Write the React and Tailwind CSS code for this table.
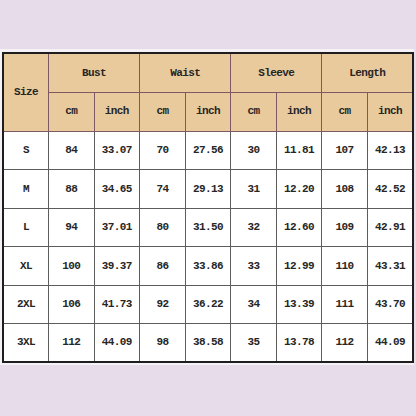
import React from "react";

const rows = [
  ["S", "84", "33.07", "70", "27.56", "30", "11.81", "107", "42.13"],
  ["M", "88", "34.65", "74", "29.13", "31", "12.20", "108", "42.52"],
  ["L", "94", "37.01", "80", "31.50", "32", "12.60", "109", "42.91"],
  ["XL", "100", "39.37", "86", "33.86", "33", "12.99", "110", "43.31"],
  ["2XL", "106", "41.73", "92", "36.22", "34", "13.39", "111", "43.70"],
  ["3XL", "112", "44.09", "98", "38.58", "35", "13.78", "112", "44.09"],
];

const groups = ["Bust", "Waist", "Sleeve", "Length"];

export default function App() {
  return (
    <div
      className="w-[416px] h-[416px] bg-[#e7dcea] pt-[49px] overflow-hidden"
      style={{ fontFamily: '"Liberation Mono", "DejaVu Sans Mono", monospace' }}
    >
      <div className="bg-[#f6f1f6] pt-[3px] pb-[2px] px-[2px] w-[414px]">
        <table className="w-[412px] h-[311px] table-fixed border-collapse border-2 border-[#1e1e1e] text-[11px] font-bold tracking-[-0.6px] text-[#262626]">
          <thead>
            <tr className="h-[39px] bg-[#e9ca9c]">
              <th rowSpan={2} className="border border-[#7d5a63] font-bold">
                Size
              </th>
              {groups.map((g) => (
                <th key={g} colSpan={2} className="border border-[#7d5a63] font-bold">
                  {g}
                </th>
              ))}
            </tr>
            <tr className="h-[39px] bg-[#e9ca9c]">
              {groups.map((g) => (
                <React.Fragment key={g}>
                  <th className="border border-[#7d5a63] font-bold">cm</th>
                  <th className="border border-[#7d5a63] font-bold">inch</th>
                </React.Fragment>
              ))}
            </tr>
          </thead>
          <tbody className="bg-white">
            {rows.map((r) => (
              <tr key={r[0]} className="h-[38px]">
                {r.map((c, i) => (
                  <td key={i} className="border border-[#5c5c5c] text-center">
                    {c}
                  </td>
                ))}
              </tr>
            ))}
          </tbody>
        </table>
      </div>
    </div>
  );
}
